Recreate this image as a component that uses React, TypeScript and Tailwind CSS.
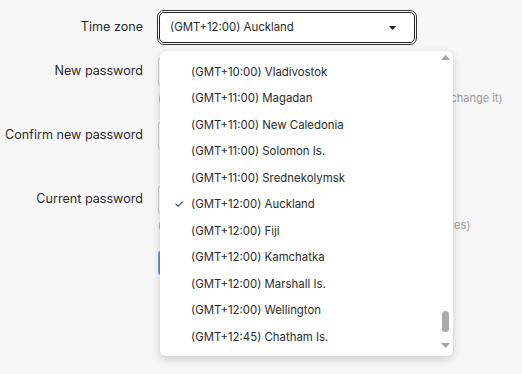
const zones = [
  "(GMT+10:00) Sydney",
  "(GMT+10:00) Vladivostok",
  "(GMT+11:00) Magadan",
  "(GMT+11:00) New Caledonia",
  "(GMT+11:00) Solomon Is.",
  "(GMT+11:00) Srednekolymsk",
  "(GMT+12:00) Auckland",
  "(GMT+12:00) Fiji",
  "(GMT+12:00) Kamchatka",
  "(GMT+12:00) Marshall Is.",
  "(GMT+12:00) Wellington",
  "(GMT+12:45) Chatham Is.",
  "(GMT+13:00) Nuku'alofa",
];

const selected = "(GMT+12:00) Auckland";

function Field({ label }: { label: string }) {
  return (
    <div className="flex items-center">
      <label className="w-[143px] text-right">{label}</label>
      <div className="ml-[15px] h-[31px] w-[258px] rounded-[5px] border border-[#d4d4d4] bg-white" />
    </div>
  );
}

export default function App() {
  return (
    <div
      className="relative min-h-screen bg-[#f7f7f7] text-[12.6px] text-[#2b2b2b]"
      style={{ fontFamily: "Inter, 'Noto Sans', sans-serif" }}
    >
      <div className="pt-[12px]">
        <div className="flex items-center">
          <label className="w-[143px] text-right">Time zone</label>
          <div className="ml-[16px] flex h-[31px] w-[256px] items-center justify-between rounded-[5px] border border-[#222] bg-white pl-[10px] pr-[18px] text-[11.4px] outline outline-1 outline-offset-1 outline-[#333]">
            <span>{selected}</span>
            <svg width="7" height="4" viewBox="0 0 7 4">
              <path d="M0 0h7L3.5 4z" fill="#222" />
            </svg>
          </div>
        </div>

        <div className="mt-[13px]">
          <Field label="New password" />
          <p className="ml-[158px] mt-[3px] text-[11px] leading-[16px] text-[#999]">
            (at least 8 characters — leave blank if you don't want to change it)
          </p>
        </div>

        <div className="mt-[14px]">
          <Field label="Confirm new password" />
        </div>

        <div className="mt-[33px]">
          <Field label="Current password" />
          <p className="ml-[158px] mt-[2px] text-[11px] leading-[16px] tracking-[0.17px] text-[#999]">
            (we need your current password to confirm your changes)
          </p>
        </div>

        <button className="ml-[158px] mt-[17px] h-[26px] w-[80px] rounded-[4px] border border-[#7aa7d6] bg-[#4a8fd8] text-[12px] text-white">
          Update
        </button>
      </div>

      {/* open select list */}
      <div className="absolute left-[160px] top-[51px] h-[305px] w-[293px] overflow-hidden rounded-[6px] bg-white shadow-[0_3px_10px_rgba(0,0,0,0.18)]">
        <div className="-mt-[18.6px] pr-[16px]">
          {zones.map((z) => (
            <div key={z} className="flex h-[26.5px] items-center text-[11.4px]">
              <span className="w-[31px] pl-[14px]">
                {z === selected ? "✓" : ""}
              </span>
              <span>{z}</span>
            </div>
          ))}
        </div>
        <div className="absolute right-0 top-0 flex h-full w-[15px] flex-col items-center pb-[8px] pt-[4px]">
          <svg width="9" height="5" viewBox="0 0 9 5">
            <path d="M4.5 0L9 5H0z" fill="#a3a3a3" />
          </svg>
          <div className="mt-auto mb-[11px] h-[21px] w-[7px] rounded-full bg-[#ababab]" />
          <svg width="9" height="5" viewBox="0 0 9 5">
            <path d="M0 0h9L4.5 5z" fill="#a3a3a3" />
          </svg>
        </div>
      </div>
    </div>
  );
}
